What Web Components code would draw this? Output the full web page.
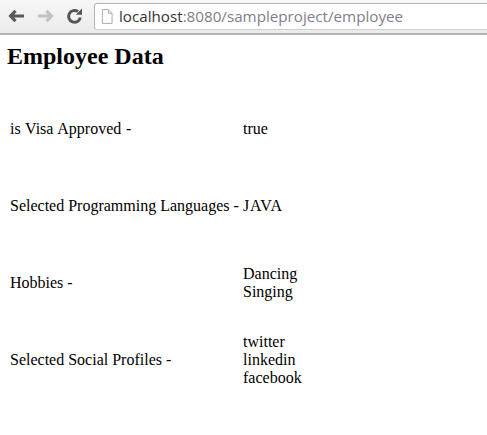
<!DOCTYPE html>
<html>
<head>
<meta charset="utf-8">
<title>Employee</title>
<style>
html, body { margin: 0; padding: 0; background: #fff; }
body { font-family: "Liberation Serif", serif; font-size: 16px; color: #000; overflow: hidden; }
</style>
</head>
<body>

<browser-bar url-host="localhost" url-rest=":8080/sampleproject/employee"></browser-bar>

<employee-page heading="Employee Data">
    <data-row label="is Visa Approved -" style="word-spacing: .7px"><div>true</div></data-row>
    <data-row label="Selected Programming Languages -"><div style="letter-spacing: .8px">JAVA</div></data-row>
    <data-row label="Hobbies -"><div>Dancing</div><div>Singing</div></data-row>
    <data-row label="Selected Social Profiles -"><div>twitter</div><div>linkedin</div><div>facebook</div></data-row>
</employee-page>

<script>
class BrowserBar extends HTMLElement
{
    constructor()
    {
        super();
        this.myRoot = this.attachShadow({ mode : "open" });
        this.#Render();
    }

    #Render()
    {
        this.myRoot.innerHTML =
        `
        <style>
        :host{
            display: flex;
            align-items: center;
            box-sizing: border-box;
            height: 35px;
            padding: 0 0 1px 7px;
            background: linear-gradient(#f7f7f7, #ebebeb);
            border-bottom: 2px solid #b4b4b4;
            overflow: hidden;
        }
        .btn{ width: 26px; height: 20px; margin-right: 3px; flex: none; display: block; }
        .box{
            flex: none;
            display: flex;
            align-items: center;
            box-sizing: border-box;
            width: 420px;
            height: 27px;
            padding-left: 6px;
            background: #fff;
            border: 1px solid #b5b5b5;
            border-bottom-color: #cfcfcf;
            border-radius: 3px;
        }
        .page{ width: 12px; height: 15px; margin-right: 6px; flex: none; }
        .url{
            font-family: "Open Sans", sans-serif;
            font-size: 15.2px;
            color: #80808a;
            white-space: nowrap;
        }
        .url b{ font-weight: 400; color: #333; }
        </style>
        <svg class="btn" viewBox="0 0 26 20">
            <path d="M8.5 4.8 L3.6 10 L8.5 15.2 M4 10 H17" fill="none" stroke="#5a5a5a" stroke-width="3.2"/>
        </svg>
        <svg class="btn" viewBox="0 0 26 20">
            <path d="M10.5 4.8 L15.4 10 L10.5 15.2 M15 10 H2" fill="none" stroke="#c2c2c2" stroke-width="3.2"/>
        </svg>
        <svg class="btn" viewBox="0 0 26 20">
            <path d="M13 5.6 A5.9 5.9 0 1 0 15.3 11.5" fill="none" stroke="#555" stroke-width="3"/>
            <path d="M10.8 8.8 H17 V2.6 Z" fill="#555"/>
        </svg>
        <div class="box">
            <svg class="page" viewBox="0 0 13 16">
                <path d="M1.5 .5 H8 L12 4.5 V15.5 H1.5 Z" fill="#fff" stroke="#a5a5a5"/>
                <path d="M8 .5 V4.5 H12" fill="#eee" stroke="#a5a5a5"/>
            </svg>
            <span class="url"><b>${this.getAttribute("url-host")}</b>${this.getAttribute("url-rest")}</span>
        </div>
        `
    }
}

class EmployeePage extends HTMLElement
{
    constructor()
    {
        super();
        this.myRoot = this.attachShadow({ mode : "open" });
        this.myRoot.innerHTML =
        `
        <style>
        :host{ display: block; padding: 8px 7px; }
        h1{ font-size: 24px; line-height: 27px; margin: 0 0 20.5px; font-weight: 700; }
        section{ display: flex; flex-direction: column; }
        </style>
        <h1>${this.getAttribute("heading")}</h1>
        <section><slot></slot></section>
        `
    }
}

class DataRow extends HTMLElement
{
    constructor()
    {
        super();
        this.myRoot = this.attachShadow({ mode : "open" });
        this.myRoot.innerHTML =
        `
        <style>
        :host{
            display: grid;
            grid-template-columns: 233px 1fr;
            align-items: center;
            height: 77px;
            line-height: 18px;
            padding-left: 3px;
        }
        </style>
        <span>${this.getAttribute("label")}</span>
        <div><slot></slot></div>
        `
    }
}

window.customElements.define('browser-bar', BrowserBar);
window.customElements.define('employee-page', EmployeePage);
window.customElements.define('data-row', DataRow);
</script>
</body>
</html>
